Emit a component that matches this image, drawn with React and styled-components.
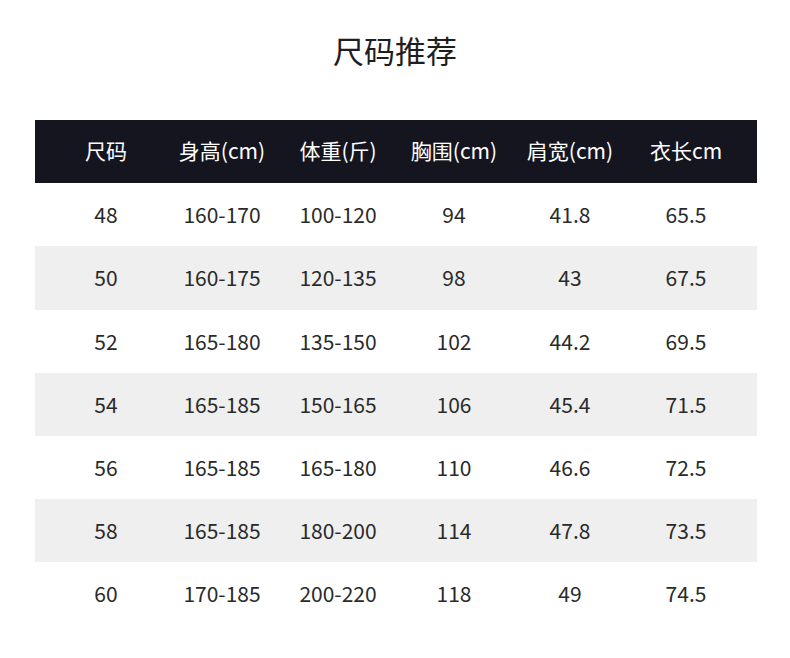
import React from 'react';
import styled, { createGlobalStyle } from 'styled-components';

const GlobalStyle = createGlobalStyle`
  body {
    margin: 0;
    background: #fff;
    font-family: "Noto Sans CJK SC", "Noto Sans", sans-serif;
  }
`;

const Page = styled.div`
  width: 790px;
  height: 658px;
  background: #fff;
`;

const Title = styled.h1`
  margin: 0;
  padding-top: 30px;
  height: 90px;
  box-sizing: border-box;
  line-height: 40px;
  text-align: center;
  font-size: 31px;
  font-weight: 400;
  color: #1e1e1e;
`;

const Table = styled.div`
  margin: 0 33px 0 35px;
  padding-top: 30px;
`;

const Row = styled.div`
  display: grid;
  grid-template-columns: repeat(6, 116px);
  padding: 0 13px;
  height: 63.2px;
  align-items: center;
  background: ${props => (props.head ? '#15151f' : props.shade ? '#efefef' : '#fff')};
  color: ${props => (props.head ? '#fff' : '#2a2a2a')};
`;

const Cell = styled.div`
  text-align: center;
  font-size: 21px;
  line-height: 1;
  margin-top: ${props => (props.head ? '-3px' : '0')};
`;

const head = ['尺码', '身高(cm)', '体重(斤)', '胸围(cm)', '肩宽(cm)', '衣长cm'];

const sizes = [
  ['48', '160-170', '100-120', '94', '41.8', '65.5'],
  ['50', '160-175', '120-135', '98', '43', '67.5'],
  ['52', '165-180', '135-150', '102', '44.2', '69.5'],
  ['54', '165-185', '150-165', '106', '45.4', '71.5'],
  ['56', '165-185', '165-180', '110', '46.6', '72.5'],
  ['58', '165-185', '180-200', '114', '47.8', '73.5'],
  ['60', '170-185', '200-220', '118', '49', '74.5']
];

export default function App() {
  return (
    <Page>
      <GlobalStyle />
      <Title>尺码推荐</Title>
      <Table>
        <Row head>
          {head.map(h => (
            <Cell head key={h}>{h}</Cell>
          ))}
        </Row>
        {sizes.map((row, i) => (
          <Row key={row[0]} shade={i % 2 === 1}>
            {row.map((v, j) => (
              <Cell key={j}>{v}</Cell>
            ))}
          </Row>
        ))}
      </Table>
    </Page>
  );
}
